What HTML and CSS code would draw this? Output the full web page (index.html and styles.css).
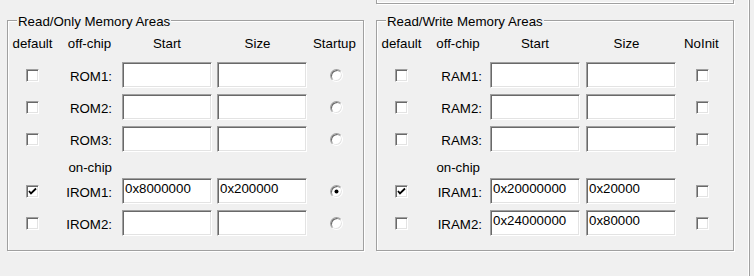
FILE: index.html
```html
<!DOCTYPE html>
<html lang="en">
<head>
    <meta charset="UTF-8">
    <title>Memory Areas</title>
    <link rel="stylesheet" href="styles.css">
</head>
<body>
<div class="page">
    <div class="prevBox"></div>
    <div class="groups">
        <fieldset class="memGroup memRo">
            <legend>Read/Only Memory Areas</legend>
            <div class="memGrid">
                <div class="head">default</div>
                <div class="head">off-chip</div>
                <div class="head">Start</div>
                <div class="head headSize">Size</div>
                <div class="head headLast">Startup</div>

                <span class="chk"></span>
                <div class="lbl">ROM1:</div>
                <input class="edit" type="text" value="">
                <input class="edit" type="text" value="">
                <span class="radio"></span>

                <span class="chk"></span>
                <div class="lbl">ROM2:</div>
                <input class="edit" type="text" value="">
                <input class="edit" type="text" value="">
                <span class="radio"></span>

                <span class="chk"></span>
                <div class="lbl">ROM3:</div>
                <input class="edit" type="text" value="">
                <input class="edit" type="text" value="">
                <span class="radio"></span>

                <div class="sub">on-chip</div>

                <span class="chk"><svg width="9" height="9" viewBox="0 0 9 9"><polyline points="1,4 3,6.5 8,1.5" fill="none" stroke="#000" stroke-width="1.8"/></svg></span>
                <div class="lbl">IROM1:</div>
                <input class="edit" type="text" value="0x8000000">
                <input class="edit" type="text" value="0x200000">
                <span class="radio isOn"></span>

                <span class="chk"></span>
                <div class="lbl">IROM2:</div>
                <input class="edit" type="text" value="">
                <input class="edit" type="text" value="">
                <span class="radio"></span>
            </div>
        </fieldset>

        <fieldset class="memGroup memRw">
            <legend>Read/Write Memory Areas</legend>
            <div class="memGrid">
                <div class="head">default</div>
                <div class="head">off-chip</div>
                <div class="head">Start</div>
                <div class="head headSize">Size</div>
                <div class="head headLast">NoInit</div>

                <span class="chk"></span>
                <div class="lbl">RAM1:</div>
                <input class="edit" type="text" value="">
                <input class="edit" type="text" value="">
                <span class="chk chkLast"></span>

                <span class="chk"></span>
                <div class="lbl">RAM2:</div>
                <input class="edit" type="text" value="">
                <input class="edit" type="text" value="">
                <span class="chk chkLast"></span>

                <span class="chk"></span>
                <div class="lbl">RAM3:</div>
                <input class="edit" type="text" value="">
                <input class="edit" type="text" value="">
                <span class="chk chkLast"></span>

                <div class="sub">on-chip</div>

                <span class="chk"><svg width="9" height="9" viewBox="0 0 9 9"><polyline points="1,4 3,6.5 8,1.5" fill="none" stroke="#000" stroke-width="1.8"/></svg></span>
                <div class="lbl">IRAM1:</div>
                <input class="edit" type="text" value="0x20000000">
                <input class="edit" type="text" value="0x20000">
                <span class="chk chkLast"></span>

                <span class="chk"></span>
                <div class="lbl">IRAM2:</div>
                <input class="edit" type="text" value="0x24000000">
                <input class="edit" type="text" value="0x80000">
                <span class="chk chkLast"></span>
            </div>
        </fieldset>
    </div>
</div>
</body>
</html>
```

FILE: styles.css
```css
body,html,div,fieldset,legend{
    padding: 0;
    margin: 0;
}
body{
    background: #f0f0f0;
    font-family: "Liberation Sans", Arial, sans-serif;
    font-size: 13.3px;
    color: #000;
}
.page{
    width: 749px;
    height: 276px;
    box-sizing: border-box;
    padding-left: 7px;
    border-right: 1px solid #fff;
    box-shadow: 1px 0 0 #a0a0a0;
}
.prevBox{
    margin-left: 369px;
    width: 358px;
    height: 4px;
    box-sizing: border-box;
    border: 1px solid #a0a0a0;
    border-top: 0;
    box-shadow: 1px 1px 0 #fff, inset 1px -1px 0 #fff;
}
.groups{
    display: flex;
    gap: 12px;
    margin-top: 8px;
}
.memGroup{
    border: 1px solid #a0a0a0;
    box-shadow: inset 1px 1px 0 #fff, 1px 1px 0 #fff;
    padding: 7px 0 14px;
    min-width: 0;
}
.memGroup legend{
    margin-left: 9px;
    padding: 2px 1px 0;
    line-height: 15px;
    background: #f0f0f0;
}
.memRo{
    width: 357px;
    box-sizing: border-box;
}
.memRw{
    width: 358px;
    box-sizing: border-box;
}
.memGrid{
    display: grid;
    grid-template-rows: 20px 26px 26px 26px 14px 26px 26px;
    row-gap: 6px;
    align-items: center;
}
.memRo .memGrid{
    grid-template-columns: 49px 55px 90px 90px 1fr;
    column-gap: 5px;
}
.memRw .memGrid{
    grid-template-columns: 49px 52px 90px 90px 1fr;
    column-gap: 6px;
}
.head{
    align-self: start;
    line-height: 15px;
    text-align: center;
    white-space: nowrap;
}
.headSize{
    padding-right: 9px;
}
.headLast{
    text-align: left;
    padding-left: 1px;
}
.memRw .headLast{
    padding-left: 2px;
}
.lbl,.sub{
    text-align: right;
    white-space: nowrap;
    padding-top: 2px;
}
.memRo .lbl{
    padding-right: 5px;
}
.memRw .lbl{
    padding-right: 2px;
}
.sub{
    grid-column: 1 / -1;
    justify-self: start;
    align-self: start;
    line-height: 14px;
    padding-top: 3px;
}
.memRo .sub{
    width: 104px;
    padding-right: 5px;
}
.memRw .sub{
    width: 103px;
    padding-right: 4px;
}
.edit{
    width: 90px;
    height: 26px;
    box-sizing: border-box;
    margin: 0;
    padding: 0 0 6px 2px;
    border: 1px solid;
    border-color: #a0a0a0 #fff #fff #a0a0a0;
    box-shadow: inset 1px 1px 0 #696969, inset -1px -1px 0 #e3e3e3;
    background: #fff;
    font: 13.3px "Liberation Sans", Arial, sans-serif;
    color: #000;
    outline: none;
}
/* classic checkbox / radio */
.chk,.radio{
    display: block;
    width: 13px;
    height: 13px;
    box-sizing: border-box;
    border: 1px solid;
    border-color: #a0a0a0 #fff #fff #a0a0a0;
    box-shadow: inset 1px 1px 0 #696969, inset -1px -1px 0 #e3e3e3;
    background: #fff;
    justify-self: center;
    position: relative;
}
.chk svg{
    display: block;
    margin: 1px 0 0 1px;
}
.chkLast{
    justify-self: start;
    margin-left: 14px;
}
.radio{
    border-radius: 50%;
    justify-self: start;
    margin-left: 18px;
}
.radio.isOn:after{
    content: "";
    position: absolute;
    left: 3px;
    top: 3px;
    width: 5px;
    height: 5px;
    border-radius: 50%;
    background: #000;
    transform: scale(0.8);
}
```
